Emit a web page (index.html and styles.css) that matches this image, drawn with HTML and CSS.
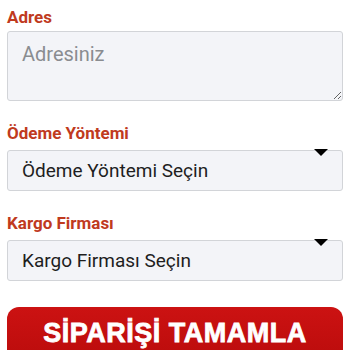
FILE: index.html
```html
<!DOCTYPE html>
<html lang="tr">
<head>
    <meta charset="UTF-8">
    <meta name="viewport" content="width=device-width, initial-scale=1.0">
    <title>Sipariş</title>
    <link rel="stylesheet" href="styles.css">
</head>
<body>
    <form class="order-form">
        <div class="field">
            <label class="field-label" for="address">Adres</label>
            <textarea id="address" class="field-input address-input" placeholder="Adresiniz"></textarea>
        </div>

        <div class="field">
            <label class="field-label" for="payment">Ödeme Yöntemi</label>
            <div class="select-wrap">
                <select id="payment" class="field-input select-input">
                    <option>Ödeme Yöntemi Seçin</option>
                </select>
                <span class="select-arrow"></span>
            </div>
        </div>

        <div class="field">
            <label class="field-label" for="cargo">Kargo Firması</label>
            <div class="select-wrap">
                <select id="cargo" class="field-input select-input">
                    <option>Kargo Firması Seçin</option>
                </select>
                <span class="select-arrow"></span>
            </div>
        </div>

        <button type="button" class="submit-btn">SİPARİŞİ TAMAMLA</button>
    </form>
</body>
</html>
```

FILE: styles.css
```css
* {
    box-sizing: border-box;
    margin: 0;
    padding: 0;
    font-family: Roboto, 'Noto Sans', sans-serif;
}

body {
    background-color: #fff;
    color: #222;
    padding: 7px;
}

.order-form {
    display: flex;
    flex-direction: column;
}

.field {
    display: flex;
    flex-direction: column;
    margin-bottom: 22px;
}

.field-label {
    font-size: 17px;
    font-weight: bold;
    color: #c03a1e;
    line-height: 20px;
    margin-bottom: 4px;
}

.field-input {
    width: 100%;
    background-color: #f3f4f8;
    border: 1px solid #d2d4d8;
    border-radius: 3px;
    font-size: 19px;
    color: #1e1e1e;
    padding: 0 14px;
    outline: none;
}

.address-input {
    height: 70px;
    padding-top: 10px;
    resize: vertical;
    line-height: 24px;
    font-size: 20px;
}

.address-input::placeholder {
    color: #8a8c90;
}

.select-wrap {
    position: relative;
    margin-top: 3px;
}

.select-input {
    height: 41px;
    appearance: none;
    -webkit-appearance: none;
}

.select-arrow {
    position: absolute;
    top: -1px;
    right: 15px;
    width: 0;
    height: 0;
    border-left: 7px solid transparent;
    border-right: 7px solid transparent;
    border-top: 7px solid #000;
}

.submit-btn {
    margin-top: 4px;
    padding: 10px 0 20px;
    border: none;
    border-radius: 12px;
    background: linear-gradient(#cc1212, #b80b0b);
    color: #fff;
    font-family: 'Liberation Sans', Arial, sans-serif;
    font-size: 27px;
    line-height: 32px;
    font-weight: bold;
    letter-spacing: 0.5px;
    -webkit-text-stroke: 0.8px #fff;
    cursor: pointer;
}
```
